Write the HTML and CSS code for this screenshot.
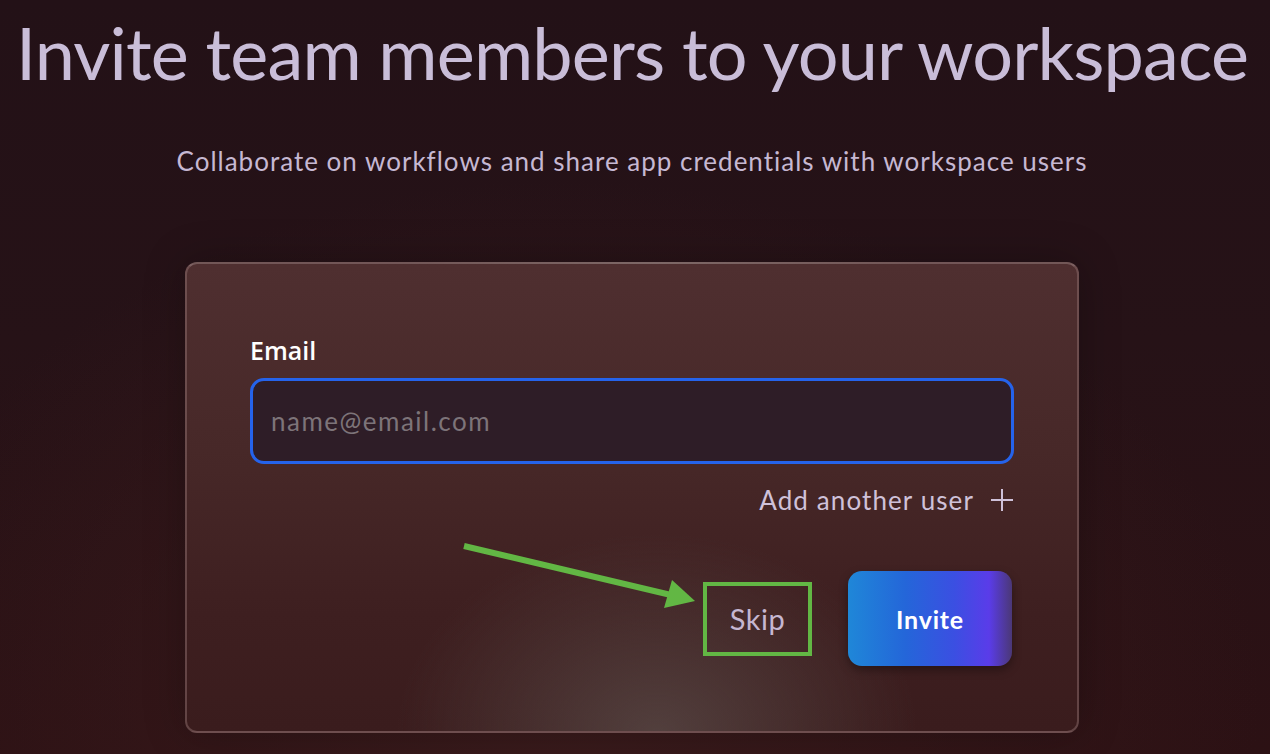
FILE: index.html
```html
<!DOCTYPE html>
<html lang="en">
<head>
    <meta charset="UTF-8">
    <meta name="viewport" content="width=device-width, initial-scale=1.0">
    <title>Invite team members</title>
    <link rel="stylesheet" href="styles.css">
</head>
<body>
    <main class="page">
        <h1 class="title">Invite team members to your workspace</h1>
        <p class="subtitle">Collaborate on workflows and share app credentials with workspace users</p>

        <section class="card">
            <label class="field-label" for="email">Email</label>
            <input class="email-input" type="email" id="email" placeholder="name@email.com">

            <button class="add-user" type="button">
                Add another user
                <svg class="plus" width="24" height="24" viewBox="0 0 24 24" aria-hidden="true">
                    <path d="M12 1v22M1 12h22" stroke="currentColor" stroke-width="2" fill="none"/>
                </svg>
            </button>

            <div class="actions">
                <button class="skip" type="button">Skip</button>
                <button class="invite" type="button">Invite</button>
            </div>

            <!-- annotation arrow pointing at Skip -->
            <svg class="arrow" width="245" height="75" viewBox="0 0 245 75" aria-hidden="true">
                <line x1="7" y1="7" x2="214" y2="56" stroke="#62b744" stroke-width="6"/>
                <polygon points="238,62 215,41 207,69" fill="#62b744"/>
            </svg>
        </section>
    </main>
</body>
</html>
```

FILE: styles.css
```css
body {
    margin: 0;
    min-height: 754px;
    font-family: Lato, "Open Sans", sans-serif;
    background-color: #241116;
    background-image:
        radial-gradient(ellipse 700px 520px at 560px 700px, #3a1b1c 0%, rgba(58, 27, 28, 0) 100%),
        linear-gradient(180deg, #231117 0%, #261217 45%, #2c1114 100%);
    overflow: hidden;
}
.page {
    width: 1264px;
    display: flex;
    flex-direction: column;
    align-items: center;
}
.title {
    margin: 16px 0 0;
    font-size: 72px;
    line-height: 1;
    font-weight: 400;
    letter-spacing: -0.85px;
    color: #c9bdd8;
    white-space: nowrap;
}
.subtitle {
    margin: 60px 0 0;
    font-size: 26px;
    line-height: 1;
    letter-spacing: 1px;
    color: #c6b8d2;
    white-space: nowrap;
}
.card {
    position: relative;
    box-sizing: border-box;
    width: 894px;
    margin-top: 88px;
    padding: 74px 63px 65px;
    display: flex;
    flex-direction: column;
    border: 2px solid rgba(150, 120, 120, 0.45);
    border-top-color: rgba(170, 145, 145, 0.5);
    border-radius: 12px;
    background-color: #442426;
    background-image:
        radial-gradient(ellipse 260px 200px at 470px 470px, rgba(90, 75, 72, 0.75) 0%, rgba(90, 75, 72, 0) 100%),
        linear-gradient(180deg, #4f2f30 0%, #472828 40%, #3e1f20 75%, #3a1c1d 100%);
    box-shadow: 0 0 40px rgba(0, 0, 0, 0.25);
}
.field-label {
    font-family: "Open Sans", sans-serif;
    font-weight: 600;
    font-size: 25px;
    line-height: 1;
    color: #ffffff;
}
.email-input {
    box-sizing: border-box;
    width: 100%;
    height: 86px;
    margin-top: 15px;
    padding: 0 18px;
    border: 3px solid #2563eb;
    border-radius: 14px;
    background-color: #2e1d27;
    color: #e8e0ee;
    font-family: Lato, sans-serif;
    font-size: 26px;
    letter-spacing: 1.5px;
    outline: none;
}
.email-input::placeholder {
    color: #7d7479;
}
.add-user {
    align-self: flex-end;
    display: flex;
    align-items: center;
    gap: 16px;
    margin-top: 23px;
    padding: 0;
    border: none;
    background: none;
    color: #cfc1d9;
    font-family: Lato, sans-serif;
    font-size: 26px;
    line-height: 1;
    letter-spacing: 1.1px;
    cursor: pointer;
}
.plus {
    display: block;
}
.actions {
    display: flex;
    justify-content: flex-end;
    align-items: center;
    gap: 36px;
    margin-top: 58px;
    margin-right: 2px;
}
.skip {
    box-sizing: border-box;
    width: 109px;
    height: 74px;
    border: 4px solid #62b744;
    background: none;
    color: #c6b7d1;
    font-family: Lato, sans-serif;
    font-size: 29px;
    letter-spacing: 0.5px;
    cursor: pointer;
}
.invite {
    width: 164px;
    height: 95px;
    border: none;
    border-radius: 14px;
    background: linear-gradient(90deg, #1f87d8 0%, #2466d9 35%, #3b4fe2 65%, #5a3ce9 86%, #4b3876 100%);
    color: #ffffff;
    font-family: Lato, sans-serif;
    font-weight: 700;
    font-size: 25px;
    letter-spacing: 0.8px;
    box-shadow: 0 4px 10px rgba(0, 0, 0, 0.35);
    cursor: pointer;
}
.arrow {
    position: absolute;
    left: 270px;
    top: 275px;
}
```
